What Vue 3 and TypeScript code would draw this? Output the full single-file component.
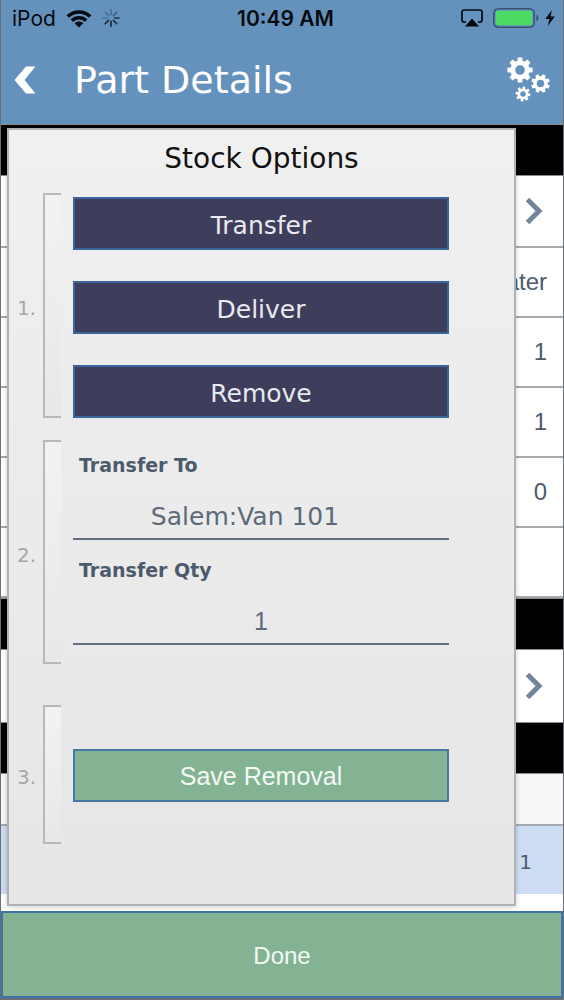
<script setup lang="ts">
import { ref } from 'vue'

type RowKind = 'bar' | 'link' | 'value' | 'head' | 'selected'
interface Row {
  kind: RowKind
  text?: string
}

const rows: Row[] = [
  { kind: 'bar' },
  { kind: 'link' },
  { kind: 'value', text: 'ater' },
  { kind: 'value', text: '1' },
  { kind: 'value', text: '1' },
  { kind: 'value', text: '0' },
  { kind: 'value' },
  { kind: 'bar' },
  { kind: 'link' },
  { kind: 'bar' },
  { kind: 'head' },
  { kind: 'selected', text: '1' },
]

const actions = ['Transfer', 'Deliver', 'Remove']
const transferTo = ref('Salem:Van 101')
const transferQty = ref('1')

// Outline of an eight-toothed gear with a round hole, for an even-odd fill.
function gear(cx: number, cy: number, outer: number, body: number, hole: number, turn: number): string {
  const points: string[] = []
  const add = (radius: number, degrees: number) => {
    const a = ((degrees + turn - 90) * Math.PI) / 180
    points.push(`${(cx + radius * Math.cos(a)).toFixed(2)} ${(cy + radius * Math.sin(a)).toFixed(2)}`)
  }
  for (let i = 0; i < 8; i++) {
    const c = i * 45
    add(body, c - 15)
    add(outer, c - 10)
    add(outer, c + 10)
    add(body, c + 15)
  }
  return `M${points.join('L')}ZM${cx - hole} ${cy}a${hole} ${hole} 0 1 0 ${hole * 2} 0a${hole} ${hole} 0 1 0 ${-hole * 2} 0Z`
}

const gears = [
  gear(13, 13, 12.8, 9.7, 4.8, 0),
  gear(33.5, 26.5, 9.5, 7.2, 3.8, 22.5),
  gear(16, 37, 7.5, 5.4, 2.7, 8),
]

const spokes = [0.35, 0.45, 0.75, 0.85, 0.95, 0.95, 0.25, 0.3]
</script>

<template>
  <div class="screen">
    <header class="top">
      <div class="status">
        <div class="status-left">
          <span>iPod</span>
          <svg width="26" height="19" viewBox="0 0 26 19" aria-hidden="true">
            <g fill="none" stroke="#050a10" stroke-width="3.6">
              <path d="M1.8 7.6C8 1.4 18 1.4 24.2 7.6" />
              <path d="M5.9 11.6C9.8 7.8 16.2 7.8 20.1 11.6" />
            </g>
            <path d="M8.6 14.2C11 11.8 15 11.8 17.4 14.2L13 18.6Z" fill="#050a10" />
          </svg>
          <svg width="18" height="18" viewBox="0 0 18 18" aria-hidden="true">
            <line
              v-for="(o, i) in spokes"
              :key="i"
              x1="9"
              y1="0.8"
              x2="9"
              y2="5.6"
              stroke="#10202f"
              stroke-width="1.6"
              stroke-linecap="round"
              :stroke-opacity="o"
              :transform="`rotate(${i * 45} 9 9)`"
            />
          </svg>
        </div>
        <time class="clock">10:49 AM</time>
        <div class="status-right">
          <svg width="22" height="18" viewBox="0 0 22 18" aria-hidden="true">
            <path d="M5 13H3a2 2 0 0 1-2-2V3a2 2 0 0 1 2-2h16a2 2 0 0 1 2 2v8a2 2 0 0 1-2 2h-2" fill="none" stroke="#050a10" stroke-width="1.7" />
            <path d="M11 9.6L18 17.4H4Z" fill="#050a10" />
          </svg>
          <svg class="battery" width="47" height="20" viewBox="0 0 47 20" aria-hidden="true">
            <rect x="0.8" y="0.8" width="40.4" height="18.4" rx="4.5" fill="none" stroke="#36536f" stroke-width="1.5" />
            <rect x="2.8" y="2.8" width="36.4" height="14.4" rx="2" fill="#4cd964" />
            <path d="M43.4 6.8c2.6 1 2.6 5.4 0 6.4Z" fill="#36536f" />
          </svg>
          <svg width="10" height="16" viewBox="0 0 10 16" aria-hidden="true">
            <path d="M6.8 0L0.2 9H4.4L2.8 16L9.8 6.6H5.6Z" fill="#050a10" />
          </svg>
        </div>
      </div>
      <div class="nav">
        <button class="icon-button back" type="button" aria-label="Back">
          <svg width="22" height="28" viewBox="0 0 22 28" aria-hidden="true">
            <path d="M12 0.5H21.5L10.5 14L21.5 27.5H12L0.5 14Z" fill="#fff" />
          </svg>
        </button>
        <h1>Part Details</h1>
        <button class="icon-button" type="button" aria-label="Settings">
          <svg width="44" height="46" viewBox="0 0 44 46" aria-hidden="true">
            <path v-for="(d, i) in gears" :key="i" :d="d" fill="#fff" fill-rule="evenodd" />
          </svg>
        </button>
      </div>
    </header>

    <main>
      <ul class="rows">
        <li v-for="(row, i) in rows" :key="i" :class="['row', row.kind]">
          <button v-if="row.kind === 'link'" class="icon-button" type="button" aria-label="Open">
            <svg width="18" height="28" viewBox="0 0 18 28" aria-hidden="true">
              <path d="M2.5 2.5L14 14L2.5 25.5" fill="none" stroke="#71869a" stroke-width="5" />
            </svg>
          </button>
          <span v-else-if="row.text">{{ row.text }}</span>
        </li>
      </ul>

      <section class="panel" aria-labelledby="panel-title">
        <h2 id="panel-title">Stock Options</h2>
        <div class="step first">
          <span class="number">1.</span>
          <span class="bracket"></span>
          <div class="body">
            <button v-for="a in actions" :key="a" class="action" type="button">{{ a }}</button>
          </div>
        </div>
        <div class="step second">
          <span class="number">2.</span>
          <span class="bracket"></span>
          <div class="body">
            <div class="field">
              <label for="transfer-to">Transfer To</label>
              <input id="transfer-to" v-model="transferTo" class="place" type="text" />
            </div>
            <div class="field">
              <label for="transfer-qty">Transfer Qty</label>
              <input id="transfer-qty" v-model="transferQty" class="qty" type="text" inputmode="numeric" />
            </div>
          </div>
        </div>
        <div class="step third">
          <span class="number">3.</span>
          <span class="bracket"></span>
          <div class="body">
            <button class="action save" type="button">Save Removal</button>
          </div>
        </div>
      </section>
    </main>

    <button class="done" type="button">Done</button>
  </div>
</template>

<style>
body {
  margin: 0;
  background: #6b6f73;
}
</style>

<style scoped>
* {
  box-sizing: border-box;
}
.screen {
  display: flex;
  flex-direction: column;
  min-height: 100vh;
  padding: 0 1px 2px;
  background: #6b6f73;
  font-family: "DejaVu Sans", Verdana, sans-serif;
  color: #4c5b6b;
}
button,
input {
  margin: 0;
  border-radius: 0;
  font-family: inherit;
  color: inherit;
}
.icon-button {
  display: flex;
  padding: 0;
  border: 0;
  background: none;
}
.top {
  height: 124px;
  background: #6592bd;
}
.status {
  display: grid;
  grid-template-columns: 1fr auto 1fr;
  align-items: center;
  height: 36px;
  padding: 0 8px 0 11px;
  font-family: Inter, "Liberation Sans", sans-serif;
  font-size: 21px;
  color: #050a10;
}
.status-left,
.status-right {
  display: flex;
  align-items: center;
}
.status-left {
  gap: 10px;
}
.status-right {
  justify-content: flex-end;
}
.battery {
  margin: 0 5px 0 10px;
}
.clock {
  padding-left: 4px;
  font-weight: 600;
}
.nav {
  display: flex;
  align-items: center;
  height: 88px;
  padding: 0 12px 0 13px;
}
.back {
  width: 60px;
}
h1 {
  flex: 1;
  margin: 0;
  font-size: 38px;
  font-weight: 400;
  line-height: 48px;
  color: #fff;
}
main {
  position: relative;
  flex: 1;
  background: #fff;
}
.rows {
  margin: 0;
  padding: 0 0 16px;
  list-style: none;
}
.row {
  display: flex;
  align-items: center;
  justify-content: flex-end;
  height: 70px;
  padding-right: 16px;
  border-bottom: 2px solid #a6a9ad;
  font-family: "Liberation Sans", Arial, sans-serif;
  font-size: 24px;
}
.row.bar {
  height: 52px;
  background: #000;
  border-top: 1px solid #8b8f94;
  border-bottom: 1px solid #8b8f94;
}
.row.link {
  height: 72px;
  padding-right: 20px;
}
.row.link:has(+ .bar) {
  border-bottom: 0;
}
.row.head {
  height: 52px;
  background: #f8f7f8;
}
.row.selected {
  height: 68px;
  padding: 4px 31px 0 0;
  border-bottom: 0;
  background: #cdddf3;
  font-family: inherit;
  font-size: 20px;
}
.panel {
  position: absolute;
  inset: 4px 47px 5px 6px;
  border: 2px solid #b2b2b4;
  background: linear-gradient(#f1f0f1, #e7e6e7);
  box-shadow: 0 1px 5px rgba(0, 0, 0, 0.2);
}
h2 {
  margin: 0 0 16px;
  padding-top: 11px;
  font-size: 28px;
  font-weight: 400;
  line-height: 36px;
  text-align: center;
  color: #111;
}
.step {
  display: grid;
  grid-template-columns: 26px 18px 1fr;
  padding: 0 65px 0 8px;
}
.number {
  align-self: center;
  padding-top: 5px;
  font-size: 20px;
  line-height: 24px;
  color: #a3a7ad;
}
.bracket {
  border: 2px solid #b8b8ba;
  border-right: 0;
  background: linear-gradient(#f3f2f3, #e8e8e8);
}
.body {
  display: flex;
  flex-direction: column;
  margin-left: 12px;
}
.first .body {
  gap: 31px;
  padding-top: 4px;
}
.second {
  margin-top: 22px;
}
.second .body {
  gap: 18px;
  padding: 13px 0 19px;
}
.third {
  margin-top: 41px;
}
.third .body {
  padding: 44px 0 42px;
}
.action {
  height: 53px;
  padding: 4px 0 0;
  border: 2px solid #3a6699;
  background: #3e3d5b;
  font-size: 25px;
  line-height: 32px;
  color: #e9e9f0;
}
.save {
  padding: 0;
  border-color: #4678a6;
  background: #84b393;
  font-family: "Liberation Sans", Arial, sans-serif;
  color: #f3f8f4;
}
.field {
  display: flex;
  flex-direction: column;
  gap: 16px;
}
label {
  padding-left: 6px;
  font-size: 19px;
  font-weight: 700;
  line-height: 24px;
}
input {
  width: 100%;
  height: 47px;
  padding: 2px 0 0;
  border: 0;
  border-bottom: 2px solid #626f80;
  background: none;
  font-size: 25px;
  text-align: center;
  color: #5d6a79;
  outline: 0;
}
.place {
  padding-right: 32px;
}
.qty {
  font-family: "Liberation Sans", Arial, sans-serif;
}
.done {
  height: 87px;
  padding: 2px 0 0;
  border: 2px solid #3f72a8;
  background: #84b393;
  font-family: "Liberation Sans", Arial, sans-serif;
  font-size: 24px;
  color: #f3f8f4;
}
</style>
